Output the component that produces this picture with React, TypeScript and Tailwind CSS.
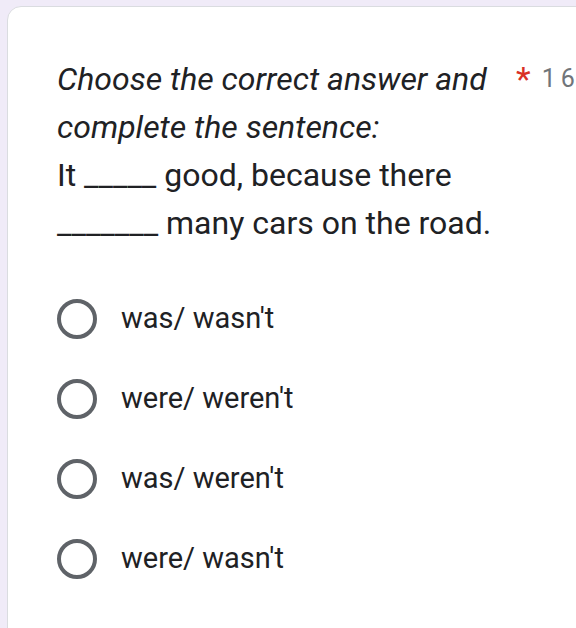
const options = ['was/ wasn\'t', 'were/ weren\'t', 'was/ weren\'t', 'were/ wasn\'t'];

export default function App() {
  return (
    <div className="h-[628px] w-[576px] overflow-hidden bg-[#f0ebf8] pl-[7px] pt-[6px]" style={{ fontFamily: 'Roboto, "Liberation Sans", sans-serif' }}>
      <div className="h-[700px] w-[720px] rounded-tl-[14px] border border-[#dadce0] bg-white pl-[49px] pt-[48px]">
        {/* Question */}
        <div className="flex items-start">
          <div className="w-[445px] shrink-0 text-[32px] leading-[48px] text-[#202124]">
            <div className="italic">Choose the correct answer and complete the sentence:</div>
            <div>It _____ good, because there _______ many cars on the road.</div>
          </div>
          <div className="ml-[14px] flex shrink-0 items-center gap-[11px] leading-[48px]">
            <span className="text-[34px] text-[#d93025]">*</span>
            <span className="text-[25px] tracking-[5px] text-[#70757a]">16 points</span>
          </div>
        </div>

        {/* Options */}
        <div className="mt-[32px] flex flex-col">
          {options.map((o) => (
            <div key={o} className="flex h-[80px] items-center">
              <div className="h-[40px] w-[40px] rounded-full border-[4px] border-[#5f6368]" />
              <span className="ml-[24px] text-[29px] text-[#202124]">{o}</span>
            </div>
          ))}
        </div>
      </div>
    </div>
  );
}
